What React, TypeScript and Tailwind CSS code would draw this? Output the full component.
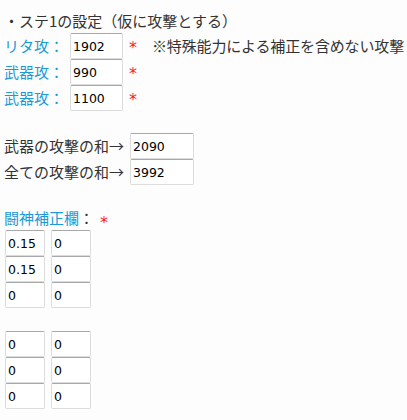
import React from 'react';

const jp = "font-['Noto_Sans_CJK_JP','Noto_Sans',sans-serif]";
const num = "font-['DejaVu_Sans','Liberation_Sans',sans-serif]";

const Field: React.FC<{ value: string; w: string }> = ({ value, w }) => (
  <input
    type="text"
    readOnly
    value={value}
    className={`${w} shrink-0 h-[26px] ${num} text-[12.5px] text-black px-[2px] bg-white border border-[#dcdcdc] border-t-[#a8a8a8] rounded-[2px] outline-none`}
  />
);

const Star = () => (
  <span className="shrink-0 text-[#ff2020] ml-[6px] text-[16px] leading-none font-['DejaVu_Sans',sans-serif] translate-y-[2px]">*</span>
);

const statRows = [
  { label: 'リタ攻：', value: '1902', note: true },
  { label: '武器攻：', value: '990', note: false },
  { label: '武器攻：', value: '1100', note: false },
];

const sumRows = [
  { label: '武器の攻撃の和→', value: '2090' },
  { label: '全ての攻撃の和→', value: '3992' },
];

const tousin1 = [
  ['0.15', '0'],
  ['0.15', '0'],
  ['0', '0'],
];

const tousin2 = [
  ['0', '0'],
  ['0', '0'],
  ['0', '0'],
];

const Pair: React.FC<{ rows: string[][] }> = ({ rows }) => (
  <div className="flex flex-col">
    {rows.map((r, i) => (
      <div key={i} className="flex gap-[6px] ml-[1px]">
        <Field value={r[0]} w="w-[40px]" />
        <Field value={r[1]} w="w-[40px]" />
      </div>
    ))}
  </div>
);

const App: React.FC = () => {
  return (
    <div className={`w-[407px] h-[420px] bg-[#fdfdfd] pl-[4px] pt-[8px] ${jp} text-[15px] text-[#333] overflow-hidden`}>
      <div className="h-[25px] leading-[25px]">・ステ1の設定（仮に攻撃とする）</div>

      <div className="flex flex-col">
        {statRows.map((row, i) => (
          <div key={i} className="flex items-center h-[26px]">
            <span className="w-[66px] shrink-0 text-[#1b9ad6]">{row.label}</span>
            <Field value={row.value} w="w-[53px]" />
            <Star />
            {row.note && (
              <span className="ml-[15px] shrink-0 whitespace-nowrap tracking-[-0.15px]">※特殊能力による補正を含めない攻撃</span>
            )}
          </div>
        ))}
      </div>

      <div className="flex flex-col mt-[22px]">
        {sumRows.map((row, i) => (
          <div key={i} className="flex items-center h-[26px]">
            <span className="w-[126px] shrink-0 whitespace-nowrap">{row.label}</span>
            <Field value={row.value} w="w-[64px]" />
          </div>
        ))}
      </div>

      <div className="h-[45px] flex items-end pb-[1px]">
        <span className="text-[#1b9ad6]">闘神補正欄</span>
        <span>：</span>
        <Star />
      </div>

      <Pair rows={tousin1} />
      <div className="h-[23px]" />
      <Pair rows={tousin2} />
    </div>
  );
};

export default App;
